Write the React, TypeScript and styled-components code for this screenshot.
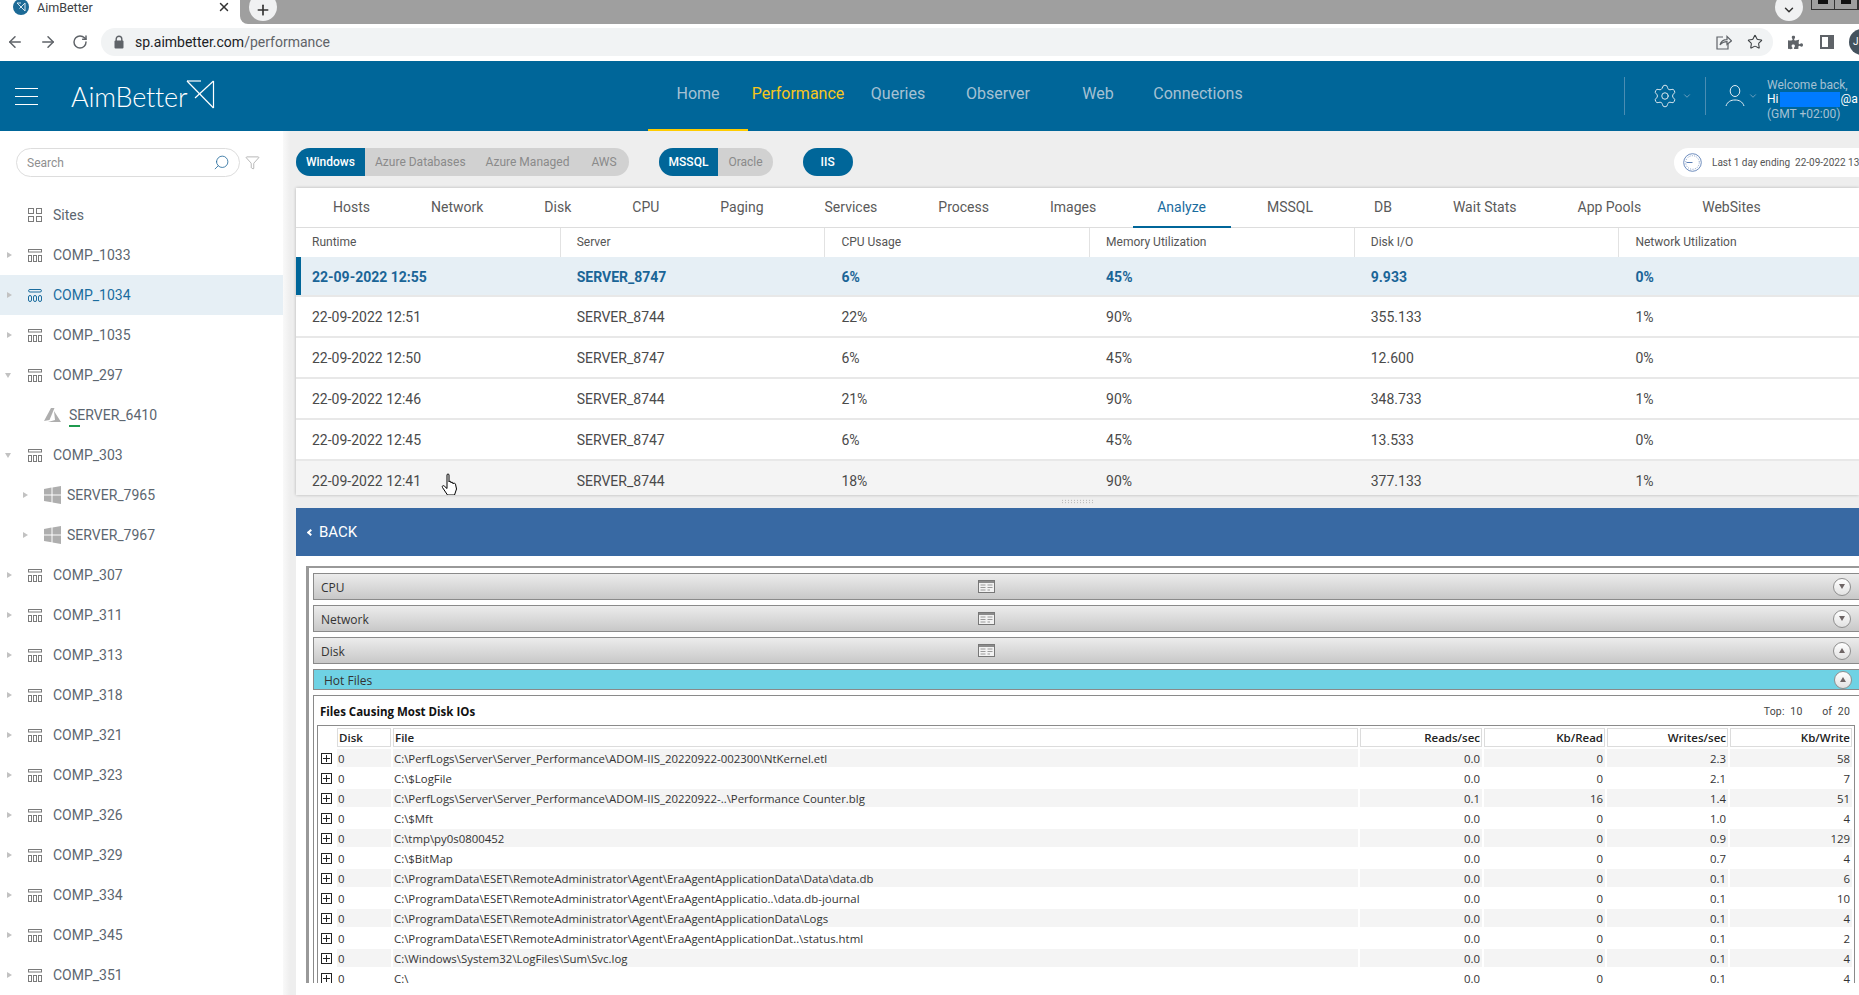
import React from "react";
import styled, { createGlobalStyle } from "styled-components";
import {
  ArrowLeft,
  ArrowRight,
  ChevronDown,
  Plus,
  RotateCw,
  Search,
  Settings,
  Star,
  X,
  Funnel,
} from "lucide-react";
import { FaPuzzlePiece } from "react-icons/fa";

const GlobalStyle = createGlobalStyle`
  html, body {
    margin: 0;
    padding: 0;
    width: 1859px;
    height: 995px;
    overflow: hidden;
    background: #fff;
    font-family: Roboto, "Liberation Sans", sans-serif;
  }
  * { box-sizing: border-box; }
`;

const Page = styled.div`
  display: flex;
  flex-direction: column;
  width: 1859px;
  height: 995px;
  overflow: hidden;
`;

/* browser chrome */
const TabStrip = styled.div`
  display: flex;
  height: 24px;
  flex: none;
  background: #fff;
  overflow: hidden;
`;

const BrowserTab = styled.div`
  display: flex;
  align-items: center;
  width: 240px;
  padding: 0 9px 10px 13px;
  font-size: 12.5px;
  color: #3c4043;
`;

const TabTitle = styled.span`
  margin-left: 8px;
  flex: 1;
`;

const TabGrey = styled.div`
  flex: 1;
  display: flex;
  background: #9f9f9f;
  border-bottom-left-radius: 8px;
`;

const RoundTabButton = styled.div<{ $left: number }>`
  width: 28px;
  height: 28px;
  margin: -7px 0 0 ${({ $left }) => $left}px;
  border-radius: 50%;
  background: #f0f1f2;
  color: #333;
  display: flex;
  align-items: center;
  justify-content: center;
  padding-top: 6px;
`;

const WindowButtons = styled.div`
  display: flex;
  margin-left: 8px;
  height: 10px;
  border: 1px solid #333;
  border-top: none;
  width: 48px;
`;

const WindowButton = styled.div`
  flex: 1;
  border-right: 1px solid #333;
  display: flex;
  justify-content: center;
`;

const WindowGlyph = styled.div`
  width: 10px;
  height: 4px;
  background: #111;
`;

const Toolbar = styled.div`
  display: flex;
  align-items: center;
  flex: none;
  height: 37px;
  padding: 0 0 1px 6px;
  background: #fff;
  color: #5f6368;
  overflow: hidden;
`;

const NavIcons = styled.div`
  display: flex;
  flex: none;
  gap: 15px;
  width: 95px;
`;

const Omnibox = styled.div`
  display: flex;
  align-items: center;
  flex: none;
  width: 1672px;
  height: 28px;
  padding: 0 10px 0 12px;
  border-radius: 14px;
  background: #f1f3f4;
  font-size: 14px;
  color: #5f6368;
`;

const UrlHost = styled.span`
  margin-left: 10px;
  color: #202124;
`;

const OmniActions = styled.div`
  display: flex;
  align-items: center;
  gap: 15px;
  margin-left: auto;
`;

const ExtensionIcons = styled.div`
  display: flex;
  align-items: center;
  flex: none;
  gap: 17px;
  margin-left: 15px;
`;

const Avatar = styled.div`
  width: 26px;
  height: 26px;
  margin-left: 15px;
  padding-left: 4px;
  flex: none;
  border-radius: 50%;
  background: #44525e;
  color: #fff;
  font-size: 10px;
  line-height: 26px;
`;

/* app header */
const Header = styled.header`
  display: flex;
  align-items: center;
  flex: none;
  height: 70px;
  background: #006699;
  overflow: hidden;
`;

const Brand = styled.div`
  display: flex;
  align-items: center;
  flex: none;
  width: 648px;
  padding-left: 15px;
`;

const Hamburger = styled.div`
  width: 23px;
  height: 17px;
  border-top: 1px solid #fff;
  border-bottom: 1px solid #fff;
  position: relative;

  &::after {
    content: "";
    position: absolute;
    left: 0;
    right: 0;
    top: 7px;
    height: 1px;
    background: #fff;
  }
`;

const LogoText = styled.span`
  margin-left: 33px;
  font-family: Lato, Roboto, sans-serif;
  font-weight: 300;
  font-size: 27px;
  color: #fff;
  letter-spacing: -0.2px;
  padding-top: 1px;
`;

const LogoMark = styled.svg`
  width: 29px;
  height: 29px;
  margin: -3px 0 0 -1px;
`;

const NavBar = styled.nav`
  display: flex;
  flex: none;
  align-self: stretch;
`;

const NavItem = styled.a<{ $active?: boolean; $underlined?: boolean }>`
  width: 100px;
  display: flex;
  align-items: center;
  justify-content: center;
  padding-bottom: 4px;
  font-size: 16px;
  white-space: nowrap;
  color: ${({ $active }) => ($active ? "#f7c61d" : "#a5c1d3")};
  border-bottom: 2px solid ${({ $underlined }) => ($underlined ? "#ffcc00" : "transparent")};
`;

const HeaderRight = styled.div`
  display: flex;
  align-items: center;
  flex: none;
  margin-left: auto;
  width: 235px;
  height: 38px;
  color: #c3d6e2;
`;

const HeaderDivider = styled.div`
  width: 1px;
  height: 38px;
  flex: none;
  background: #4a8db3;
`;

const GearCell = styled.div`
  display: flex;
  align-items: center;
  flex: none;
  width: 80px;
  padding-left: 27px;
  gap: 4px;
`;

const UserCell = styled.div`
  display: flex;
  align-items: center;
  flex: none;
  padding-left: 19px;
  gap: 3px;
`;

const UserText = styled.div`
  display: flex;
  flex-direction: column;
  flex: none;
  margin-left: 9px;
  padding-top: 6px;
  white-space: nowrap;
  font-size: 12px;
  line-height: 14px;
  color: #a5c1d3;
`;

const UserName = styled.div`
  display: flex;
  color: #fff;
  font-size: 12px;
`;

const Redaction = styled.span`
  width: 60px;
  height: 15px;
  margin-left: 2px;
  background: #007bff;
`;

/* page body */
const Body = styled.div`
  flex: 1;
  display: flex;
  min-height: 0;
`;

const Sidebar = styled.aside`
  width: 283px;
  flex: none;
  background: #fff;
  overflow: hidden;
`;

const SearchRow = styled.div`
  display: flex;
  align-items: center;
  padding: 17px 0 18px 16px;
`;

const SearchBox = styled.div`
  display: flex;
  align-items: center;
  width: 224px;
  height: 29px;
  padding: 0 9px 0 10px;
  border: 1px solid #ddd;
  border-radius: 15px;
  color: #2a6f9e;
`;

const SearchInput = styled.input`
  flex: 1;
  min-width: 0;
  padding: 0;
  border: none;
  outline: none;
  background: transparent;
  font-family: inherit;
  font-size: 12px;
  &::placeholder { color: #8f8f8f; }
`;

const FilterIcon = styled.div`
  display: flex;
  margin-left: 5px;
  color: #8d8d8d;
`;

const TreeRow = styled.div<{ $level?: number; $selected?: boolean }>`
  display: flex;
  align-items: center;
  height: 40px;
  padding-left: ${({ $level }) => ($level ? 23 : 7)}px;
  font-size: 14px;
  color: ${({ $selected }) => ($selected ? "#1a6c9e" : "#5c6670")};
  background: ${({ $selected }) => ($selected ? "#e6eff5" : "transparent")};
`;

const CaretCell = styled.div`
  flex: none;
  width: 21px;
  display: flex;
`;

const Caret = styled.div<{ $open?: boolean }>`
  width: 0;
  height: 0;
  ${({ $open }) =>
    $open
      ? "border-left: 3.5px solid transparent; border-right: 3.5px solid transparent; border-top: 5px solid #c2c2c2; margin-left: -2px;"
      : "border-top: 3.5px solid transparent; border-bottom: 3.5px solid transparent; border-left: 5px solid #c2c2c2;"}
`;

const TreeLabel = styled.span<{ $gap: number; $online?: boolean }>`
  position: relative;
  margin-left: ${({ $gap }) => $gap}px;

  &::after {
    content: "";
    display: ${({ $online }) => ($online ? "block" : "none")};
    position: absolute;
    left: 0;
    bottom: -4px;
    width: 11px;
    height: 2px;
    background: #1f9a4f;
  }
`;

const Main = styled.main`
  flex: 1;
  min-width: 0;
  padding-left: 13px;
  background: linear-gradient(to right, #f9f9f9, #eeeeee 7px);
  overflow: hidden;
`;

const Controls = styled.div`
  display: flex;
  align-items: flex-start;
  gap: 30px;
  height: 57px;
  padding-top: 17px;
`;

const SegGroup = styled.div`
  display: flex;
  flex: none;
  height: 28px;
  border-radius: 14px;
  overflow: hidden;
  background: #d1d1d1;
`;

const SegButton = styled.div<{ $active?: boolean; $pad?: number }>`
  display: flex;
  align-items: center;
  padding: 0 ${({ $pad }) => $pad ?? 10}px;
  font-size: 12px;
  font-weight: ${({ $active }) => ($active ? 500 : 400)};
  color: ${({ $active }) => ($active ? "#fff" : "#8a8a8a")};
  background: ${({ $active }) => ($active ? "#006699" : "transparent")};
  white-space: nowrap;
`;

const TimePill = styled.div`
  display: flex;
  align-items: center;
  flex: none;
  gap: 10px;
  width: 185px;
  height: 29px;
  margin-left: auto;
  padding-left: 9px;
  border-radius: 15px 0 0 15px;
  background: #fff;
  font-size: 10px;
  color: #555;
  white-space: pre;
  overflow: hidden;

  svg { flex: none; }
`;

const Card = styled.section`
  height: 307px;
  background: #fff;
  box-shadow: 0 0 3px rgba(0, 0, 0, 0.25);
  overflow: hidden;
`;

const TabBar = styled.div`
  display: flex;
  gap: 61px;
  height: 40px;
  padding-left: 37px;
  border-bottom: 1px solid #ddd;
`;

const TabItem = styled.div<{ $active?: boolean }>`
  position: relative;
  display: flex;
  align-items: center;
  padding-bottom: 2px;
  font-size: 14px;
  color: ${({ $active }) => ($active ? "#1a6c9e" : "#5a5a5a")};

  &::after {
    content: "";
    display: ${({ $active }) => ($active ? "block" : "none")};
    position: absolute;
    left: -24px;
    right: -25px;
    bottom: -1px;
    height: 2px;
    background: #006699;
  }
`;

const TableHead = styled.div`
  display: grid;
  grid-template-columns: repeat(6, 264.7px);
  height: 29px;
  align-items: stretch;
`;

const HeadCell = styled.div`
  display: flex;
  align-items: center;
  padding: 0 0 1px 16px;
  font-size: 12px;
  color: #555;
  border-right: 1px solid #e2e2e2;
`;

const DataRow = styled.div<{ $selected?: boolean; $hover?: boolean }>`
  position: relative;
  display: grid;
  grid-template-columns: repeat(6, 264.7px);
  align-items: center;
  height: ${({ $selected }) => ($selected ? 40 : 41)}px;
  font-size: 14px;
  font-weight: ${({ $selected }) => ($selected ? 700 : 400)};
  color: ${({ $selected }) => ($selected ? "#1a6597" : "#4a4a4a")};
  background: ${({ $selected, $hover }) => ($selected ? "#e6eff5" : $hover ? "#f4f4f4" : "#fff")};
  box-shadow: ${({ $selected }) => ($selected ? "inset 5px 0 0 #006699" : "none")};
  border-bottom: 2px solid #e8e8e8;
`;

const DataCell = styled.div`
  padding: 1px 0 0 16px;
`;

const HandCursor = styled.svg`
  position: absolute;
  left: 145px;
  top: 12px;
  width: 18px;
  height: 23px;
`;

const Gutter = styled.div`
  display: flex;
  justify-content: center;
  align-items: center;
  height: 13px;
`;

const GripDots = styled.div`
  width: 34px;
  height: 5px;
  background-image: radial-gradient(circle, #aaa 0.7px, transparent 0.8px);
  background-size: 3px 2.5px;
`;

const BackBar = styled.div`
  display: flex;
  align-items: center;
  height: 48px;
  padding-left: 12px;
  background: #3869a3;
  color: #fff;
  font-size: 15px;
`;

const BackChevron = styled.span`
  display: block;
  width: 5px;
  height: 5px;
  margin-right: 6px;
  border-left: 2px solid #fff;
  border-bottom: 2px solid #fff;
  transform: rotate(45deg);
`;

/* drill-down panel */
const Detail = styled.div`
  height: 439px;
  padding: 10px 0 12px 10px;
  background: #fff;
`;

const Frame = styled.div`
  height: 100%;
  padding: 5px 0 0 4px;
  border-top: 2px solid #999;
  border-left: 3px solid #999;
  overflow: hidden;
  font-family: "Open Sans", "Noto Sans", sans-serif;
`;

const Bar = styled.div`
  display: flex;
  align-items: center;
  height: 27px;
  margin-bottom: 5px;
  padding: 0 8px 0 7px;
  border: 1px solid #8a8a8a;
  border-right: none;
  background: linear-gradient(to bottom, #ececec, #c8c8c8);
  font-size: 12px;
  color: #333;
`;

const BarLabel = styled.span`
  flex: 0 0 657px;
  padding-top: 2px;
`;

const HotBar = styled(Bar)`
  height: 21px;
  padding-left: 10px;
  background: #6fd2e4;
  padding-right: 7px;
`;

const HotLabel = styled.span`
  padding-top: 2px;
`;

const RoundToggle = styled.div<{ $up?: boolean }>`
  display: flex;
  align-items: center;
  justify-content: center;
  flex: none;
  width: 18px;
  height: 18px;
  margin-left: auto;
  border: 1px solid #8f8f8f;
  border-radius: 50%;
  background: linear-gradient(to bottom, #fff, #e2e2e2);

  &::before {
    content: "";
    width: 0;
    height: 0;
    border-left: 3px solid transparent;
    border-right: 3px solid transparent;
    ${({ $up }) => ($up ? "border-bottom: 5px solid #6e6565;" : "border-top: 5px solid #6e6565;")}
  }
`;

const InnerPanel = styled.div`
  height: 300px;
  padding: 0 0 0 3px;
  border-top: 1px solid #8a8a8a;
  border-left: 1px solid #8a8a8a;
`;

const InnerTitleRow = styled.div`
  display: flex;
  align-items: center;
  justify-content: space-between;
  height: 29px;
  padding: 2px 9px 0 3px;
`;

const InnerTitle = styled.div`
  font-size: 11.5px;
  font-weight: 700;
  color: #111;
`;

const TopCount = styled.div`
  font-family: Roboto, sans-serif;
  font-size: 10.5px;
  color: #444;
  letter-spacing: 0.2px;
  white-space: pre;
`;

const FileGrid = styled.div`
  width: 1538px;
  height: 258px;
  padding: 2px 1px 0;
  border: 1px solid #8a8a8a;
  border-bottom: none;
  overflow: hidden;
`;

const gridColumns = "16px 54px 965px 122px 121px 121px 122px";

const GridHeadRow = styled.div`
  display: grid;
  grid-template-columns: ${gridColumns};
  column-gap: 2px;
  height: 19px;
  margin-bottom: 2px;
`;

const GridHead = styled.div<{ $right?: boolean; $blank?: boolean }>`
  display: flex;
  align-items: center;
  justify-content: ${({ $right }) => ($right ? "flex-end" : "flex-start")};
  padding: 0 1px;
  font-size: 11.5px;
  font-weight: 600;
  color: #222;
  border: ${({ $blank }) => ($blank ? "none" : "1px solid #dcdcdc")};
`;

const GridRow = styled.div`
  display: grid;
  grid-template-columns: ${gridColumns};
  column-gap: 2px;
  height: 18px;
  margin-bottom: 2px;
`;

const GridCell = styled.div<{ $right?: boolean; $band?: boolean }>`
  display: flex;
  align-items: center;
  justify-content: ${({ $right }) => ($right ? "flex-end" : "flex-start")};
  padding: 0 2px 0 1px;
  font-size: 11.4px;
  color: #333;
  white-space: nowrap;
  background: ${({ $band }) => ($band ? "#f4f4f4" : "transparent")};
`;

const Expander = styled.div`
  position: relative;
  width: 11px;
  height: 11px;
  margin: 4px 0 0 2px;
  border: 1px solid #222;

  &::before {
    content: "";
    position: absolute;
    left: 1px;
    right: 1px;
    top: 4px;
    height: 1px;
    background: #222;
  }

  &::after {
    content: "";
    position: absolute;
    top: 1px;
    bottom: 1px;
    left: 4px;
    width: 1px;
    background: #222;
  }
`;

/* drawn icons */
const CompIcon = ({ selected }: { selected?: boolean }) => {
  const color = selected ? "#1a6c9e" : "#7a7a7a";
  const rx = selected ? 1.5 : 0;
  return (
    <svg width="14" height="13" viewBox="0 0 14 13" fill="none" stroke={color} strokeWidth="1">
      <rect x="0.5" y="0.5" width="13" height="2.5" rx={rx} />
      <rect x="0.5" y="6.5" width="3" height="6" rx={rx} />
      <rect x="5.5" y="6.5" width="3" height="6" rx={rx} />
      <rect x="10.5" y="6.5" width="3" height="6" rx={rx} />
    </svg>
  );
};

const SitesIcon = () => (
  <svg width="14" height="14" viewBox="0 0 14 14" fill="none" stroke="#7a7a7a" strokeWidth="1">
    <rect x="0.5" y="0.5" width="5" height="5" />
    <rect x="8.5" y="0.5" width="5" height="5" />
    <rect x="0.5" y="8.5" width="5" height="5" />
    <rect x="8.5" y="8.5" width="5" height="5" />
  </svg>
);

const WindowsIcon = () => (
  <svg width="17" height="18" viewBox="0 0 17 18" fill="#aeaeae">
    <polygon points="0,3 7.5,1.6 7.5,8.4 0,8.4" />
    <polygon points="8.5,1.4 17,0 17,8.4 8.5,8.4" />
    <polygon points="0,9.4 7.5,9.4 7.5,16.2 0,15" />
    <polygon points="8.5,9.4 17,9.4 17,18 8.5,16.5" />
  </svg>
);

const AzureIcon = () => (
  <svg width="17" height="14" viewBox="0 0 17 14" fill="#aeaeae">
    <polygon points="7,0 10.5,0 5.5,12 0,13" />
    <polygon points="10,3 17,14 4,14 11,12" />
  </svg>
);

const MarkPaths = () => (
  <>
    <path d="M1 1 H15" />
    <path d="M1 1 L27.5 28" />
    <path d="M27.5 1 V28" />
    <path d="M27.5 1 L9 18" />
  </>
);

const Favicon = () => (
  <svg width="16" height="16" viewBox="0 0 16 16" style={{ marginTop: -1 }}>
    <circle cx="8" cy="8" r="8" fill="#1c6a96" />
    <path d="M4 4 H8 M4 4 L12 12 M12 4 V12 M12 4 L6.5 9.5" stroke="#d5e6f0" strokeWidth="1" fill="none" />
  </svg>
);

const LockIcon = () => (
  <svg width="12" height="14" viewBox="0 0 12 14">
    <path d="M3.2 6 V4 a2.8 2.8 0 0 1 5.6 0 V6" fill="none" stroke="#5f6368" strokeWidth="1.4" />
    <rect x="1.5" y="5.5" width="9" height="8" rx="1" fill="#5f6368" />
  </svg>
);

const ShareIcon = () => (
  <svg width="16" height="16" viewBox="0 0 16 16" fill="none" stroke="#5f6368" strokeWidth="1.2">
    <path d="M7 3 H1 V15 H12 V10" />
    <path d="M4 11 C5 7 8 5.6 11 5.6 V2.5 L15.5 6.8 L11 10.5 V7.6 C8.5 7.6 6 8.5 4 11 Z" />
  </svg>
);

const PanelIcon = () => (
  <svg width="14" height="14" viewBox="0 0 14 14">
    <rect x="1" y="1" width="12" height="12" fill="none" stroke="#5f6368" strokeWidth="2" />
    <rect x="8" y="1" width="5" height="12" fill="#5f6368" />
  </svg>
);

const UserIcon = () => (
  <svg width="20" height="22" viewBox="0 0 20 22" fill="none" stroke="#e4edf3" strokeWidth="1">
    <ellipse cx="10" cy="6" rx="4.8" ry="5.5" />
    <path d="M1 21 C2.5 16.5 6 15 10 15 C14 15 17.5 16.5 19 21" />
  </svg>
);

const ClockIcon = () => (
  <svg width="19" height="19" viewBox="0 0 19 19" fill="none" stroke="#5c7fb5">
    <circle cx="9.5" cy="9.5" r="8.8" strokeWidth="0.9" />
    <circle cx="9.5" cy="9.5" r="6.8" strokeWidth="0.8" strokeDasharray="1 1.4" />
    <path d="M3.5 9.5 H9.5" strokeWidth="1" />
  </svg>
);

const CalendarIcon = () => (
  <svg width="17" height="13" viewBox="0 0 17 13">
    <rect x="0.5" y="0.5" width="16" height="12" fill="#f2f2f2" stroke="#777" />
    <rect x="1" y="1" width="15" height="2" fill="#8b8b8b" />
    <path d="M2.5 5 H7.5 M9.5 5 H14.5 M2.5 7.5 H7.5 M9.5 7.5 H14.5 M2.5 10 H7.5 M9.5 10 H12" stroke="#9a9a9a" />
  </svg>
);

type TreeItem = {
  name: string;
  kind: "sites" | "comp" | "windows" | "azure";
  level?: number;
  open?: boolean;
  selected?: boolean;
  noCaret?: boolean;
  online?: boolean;
};

const compNames = ["307", "311", "313", "318", "321", "323", "326", "329", "334", "345", "351"];

const tree: TreeItem[] = [
  { name: "Sites", kind: "sites", noCaret: true },
  { name: "COMP_1033", kind: "comp" },
  { name: "COMP_1034", kind: "comp", selected: true },
  { name: "COMP_1035", kind: "comp" },
  { name: "COMP_297", kind: "comp", open: true },
  { name: "SERVER_6410", kind: "azure", level: 1, noCaret: true, online: true },
  { name: "COMP_303", kind: "comp", open: true },
  { name: "SERVER_7965", kind: "windows", level: 1 },
  { name: "SERVER_7967", kind: "windows", level: 1 },
  ...compNames.map((n): TreeItem => ({ name: `COMP_${n}`, kind: "comp" })),
];

const navItems = ["Home", "Performance", "Queries", "Observer", "Web", "Connections"];

const tabs = [
  "Hosts", "Network", "Disk", "CPU", "Paging", "Services", "Process", "Images",
  "Analyze", "MSSQL", "DB", "Wait Stats", "App Pools", "WebSites",
];

const columns = ["Runtime", "Server", "CPU Usage", "Memory Utilization", "Disk I/O", "Network Utilization"];

const runtimeRows = [
  ["22-09-2022 12:55", "SERVER_8747", "6%", "45%", "9.933", "0%"],
  ["22-09-2022 12:51", "SERVER_8744", "22%", "90%", "355.133", "1%"],
  ["22-09-2022 12:50", "SERVER_8747", "6%", "45%", "12.600", "0%"],
  ["22-09-2022 12:46", "SERVER_8744", "21%", "90%", "348.733", "1%"],
  ["22-09-2022 12:45", "SERVER_8747", "6%", "45%", "13.533", "0%"],
  ["22-09-2022 12:41", "SERVER_8744", "18%", "90%", "377.133", "1%"],
];

const fileRows = [
  ["C:\\PerfLogs\\Server\\Server_Performance\\ADOM-IIS_20220922-002300\\NtKernel.etl", "0.0", "0", "2.3", "58"],
  ["C:\\$LogFile", "0.0", "0", "2.1", "7"],
  ["C:\\PerfLogs\\Server\\Server_Performance\\ADOM-IIS_20220922-..\\Performance Counter.blg", "0.1", "16", "1.4", "51"],
  ["C:\\$Mft", "0.0", "0", "1.0", "4"],
  ["C:\\tmp\\py0s0800452", "0.0", "0", "0.9", "129"],
  ["C:\\$BitMap", "0.0", "0", "0.7", "4"],
  ["C:\\ProgramData\\ESET\\RemoteAdministrator\\Agent\\EraAgentApplicationData\\Data\\data.db", "0.0", "0", "0.1", "6"],
  ["C:\\ProgramData\\ESET\\RemoteAdministrator\\Agent\\EraAgentApplicatio..\\data.db-journal", "0.0", "0", "0.1", "10"],
  ["C:\\ProgramData\\ESET\\RemoteAdministrator\\Agent\\EraAgentApplicationData\\Logs", "0.0", "0", "0.1", "4"],
  ["C:\\ProgramData\\ESET\\RemoteAdministrator\\Agent\\EraAgentApplicationDat..\\status.html", "0.0", "0", "0.1", "2"],
  ["C:\\Windows\\System32\\LogFiles\\Sum\\Svc.log", "0.0", "0", "0.1", "4"],
  ["C:\\", "0.0", "0", "0.1", "4"],
];

const treeIcon = (item: TreeItem) => {
  if (item.kind === "sites") return <SitesIcon />;
  if (item.kind === "windows") return <WindowsIcon />;
  if (item.kind === "azure") return <AzureIcon />;
  return <CompIcon selected={item.selected} />;
};

const App: React.FC = () => {
  return (
    <Page>
      <GlobalStyle />
      <TabStrip>
        <BrowserTab>
          <Favicon />
          <TabTitle>AimBetter</TabTitle>
          <X size={14} strokeWidth={2.5} color="#333" />
        </BrowserTab>
        <TabGrey>
          <RoundTabButton $left={9}>
            <Plus size={16} strokeWidth={2.5} />
          </RoundTabButton>
          <RoundTabButton $left={1498}>
            <ChevronDown size={14} strokeWidth={2.5} />
          </RoundTabButton>
          <WindowButtons>
            <WindowButton>
              <WindowGlyph />
            </WindowButton>
            <WindowButton>
              <WindowGlyph />
            </WindowButton>
          </WindowButtons>
        </TabGrey>
      </TabStrip>

      <Toolbar>
        <NavIcons>
          <ArrowLeft size={18} strokeWidth={2} />
          <ArrowRight size={18} strokeWidth={2} />
          <RotateCw size={16} strokeWidth={2.2} style={{ marginTop: 1 }} />
        </NavIcons>
        <Omnibox>
          <LockIcon />
          <UrlHost>sp.aimbetter.com</UrlHost>
          <span>/performance</span>
          <OmniActions>
            <ShareIcon />
            <Star size={16} strokeWidth={1.6} color="#3c4043" />
          </OmniActions>
        </Omnibox>
        <ExtensionIcons>
          <FaPuzzlePiece size={15} />
          <PanelIcon />
        </ExtensionIcons>
        <Avatar>J</Avatar>
      </Toolbar>

      <Header>
        <Brand>
          <Hamburger />
          <LogoText>AimBetter</LogoText>
          <LogoMark viewBox="0 0 29 29" fill="none" stroke="#fff" strokeWidth="1.2">
            <MarkPaths />
          </LogoMark>
        </Brand>
        <NavBar>
          {navItems.map((item, i) => (
            <NavItem key={item} $active={item === "Performance"} $underlined={i === 0}>
              {item}
            </NavItem>
          ))}
        </NavBar>
        <HeaderRight>
          <HeaderDivider />
          <GearCell>
            <Settings size={26} strokeWidth={0.9} color="#dfe9f0" />
            <ChevronDown size={10} color="#7fa9c4" />
          </GearCell>
          <HeaderDivider />
          <UserCell>
            <UserIcon />
            <ChevronDown size={10} color="#7fa9c4" />
          </UserCell>
          <UserText>
            <span>Welcome back,</span>
            <UserName>
              Hi
              <Redaction />
              @a
            </UserName>
            <span>(GMT +02:00)</span>
          </UserText>
        </HeaderRight>
      </Header>

      <Body>
        <Sidebar>
          <SearchRow>
            <SearchBox>
              <SearchInput placeholder="Search" />
              <Search size={17} strokeWidth={1.2} style={{ transform: "scaleX(-1)" }} />
            </SearchBox>
            <FilterIcon>
              <Funnel size={15} strokeWidth={1} />
            </FilterIcon>
          </SearchRow>
          {tree.map((item) => (
            <TreeRow key={item.name} $level={item.level} $selected={item.selected}>
              <CaretCell>{!item.noCaret && <Caret $open={item.open} />}</CaretCell>
              {treeIcon(item)}
              <TreeLabel $gap={item.level ? (item.online ? 8 : 6) : 11} $online={item.online}>
                {item.name}
              </TreeLabel>
            </TreeRow>
          ))}
        </Sidebar>

        <Main>
          <Controls>
            <SegGroup>
              <SegButton $active>Windows</SegButton>
              <SegButton>Azure Databases</SegButton>
              <SegButton>Azure Managed</SegButton>
              <SegButton $pad={12}>AWS</SegButton>
            </SegGroup>
            <SegGroup>
              <SegButton $active>MSSQL</SegButton>
              <SegButton>Oracle</SegButton>
            </SegGroup>
            <SegGroup>
              <SegButton $active $pad={18}>IIS</SegButton>
            </SegGroup>
            <TimePill>
              <ClockIcon />
              {"Last 1 day ending  22-09-2022 13"}
            </TimePill>
          </Controls>

          <Card>
            <TabBar>
              {tabs.map((tab) => (
                <TabItem key={tab} $active={tab === "Analyze"}>
                  {tab}
                </TabItem>
              ))}
            </TabBar>
            <TableHead>
              {columns.map((c) => (
                <HeadCell key={c}>{c}</HeadCell>
              ))}
            </TableHead>
            {runtimeRows.map((row, i) => (
              <DataRow key={row[0]} $selected={i === 0} $hover={i === 5}>
                {row.map((v, j) => (
                  <DataCell key={j}>{v}</DataCell>
                ))}
                {i === 5 && (
                  <HandCursor viewBox="0 0 18 23" fill="#fff" stroke="#000" strokeWidth="1">
                    <path d="M6 2 C6 .6 8 .6 8 2 V9 C8 8 10 8 10 9 V10 C10 9 12 9 12 10 V11 C12 10 14.5 10 14.5 11.2 L15.5 16 L13.5 22 H6.5 L1.5 14.5 C.7 13 2.2 12 3.3 13.1 L6 15.5 Z" />
                  </HandCursor>
                )}
              </DataRow>
            ))}
          </Card>

          <Gutter>
            <GripDots />
          </Gutter>

          <BackBar>
            <BackChevron />
            BACK
          </BackBar>

          <Detail>
            <Frame>
              <Bar>
                <BarLabel>CPU</BarLabel>
                <CalendarIcon />
                <RoundToggle />
              </Bar>
              <Bar>
                <BarLabel>Network</BarLabel>
                <CalendarIcon />
                <RoundToggle />
              </Bar>
              <Bar>
                <BarLabel>Disk</BarLabel>
                <CalendarIcon />
                <RoundToggle $up />
              </Bar>
              <HotBar>
                <HotLabel>Hot Files</HotLabel>
                <RoundToggle $up />
              </HotBar>
              <InnerPanel>
                <InnerTitleRow>
                  <InnerTitle>Files Causing Most Disk IOs</InnerTitle>
                  <TopCount>{"Top:  10       of  20"}</TopCount>
                </InnerTitleRow>
                <FileGrid>
                  <GridHeadRow>
                    <GridHead $blank />
                    <GridHead>Disk</GridHead>
                    <GridHead>File</GridHead>
                    <GridHead $right>Reads/sec</GridHead>
                    <GridHead $right>Kb/Read</GridHead>
                    <GridHead $right>Writes/sec</GridHead>
                    <GridHead $right>Kb/Write</GridHead>
                  </GridHeadRow>
                  {fileRows.map((row, i) => (
                    <GridRow key={i}>
                      <Expander />
                      <GridCell $band={i % 2 === 0}>0</GridCell>
                      <GridCell $band={i % 2 === 0}>{row[0]}</GridCell>
                      {row.slice(1).map((v, j) => (
                        <GridCell key={j} $right $band={i % 2 === 0}>
                          {v}
                        </GridCell>
                      ))}
                    </GridRow>
                  ))}
                </FileGrid>
              </InnerPanel>
            </Frame>
          </Detail>
        </Main>
      </Body>
    </Page>
  );
};

export default App;
